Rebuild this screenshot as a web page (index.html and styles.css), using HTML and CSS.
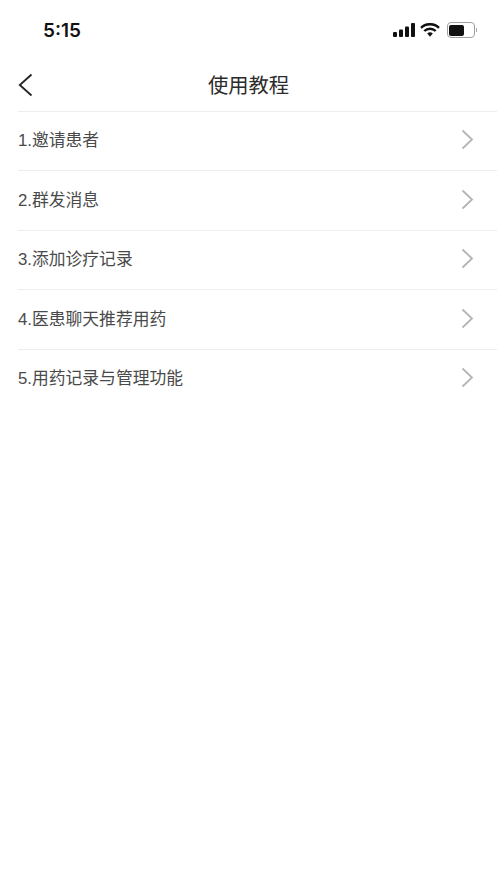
FILE: index.html
```html
<!DOCTYPE html>
<html lang="zh-CN">
<head>
  <meta charset="UTF-8">
  <title>使用教程</title>
  <link rel="stylesheet" href="styles.css">
</head>
<body>
  <div class="status-bar">
    <span class="time">5:15</span>
    <div class="status-icons">
      <svg class="signal" width="22" height="14" viewBox="0 0 22 14">
        <rect x="0" y="9" width="4" height="5" rx="1"/>
        <rect x="6" y="6.5" width="4" height="7.5" rx="1"/>
        <rect x="12" y="3.5" width="4" height="10.5" rx="1"/>
        <rect x="18" y="0" width="4" height="14" rx="1"/>
      </svg>
      <svg class="wifi" width="20" height="14" viewBox="0 0 20 14">
        <path d="M1 4.8a13 13 0 0 1 18 0" fill="none" stroke="#111" stroke-width="2.4"/>
        <path d="M4.3 8a8.2 8.2 0 0 1 11.4 0" fill="none" stroke="#111" stroke-width="2.4"/>
        <path d="M7.2 10.6a4 4 0 0 1 5.6 0L10 13.8z" fill="#111"/>
      </svg>
      <div class="battery">
        <div class="battery-body"><div class="battery-level"></div></div>
        <div class="battery-tip"></div>
      </div>
    </div>
  </div>

  <div class="nav-bar">
    <svg class="back" width="15" height="24" viewBox="0 0 15 24">
      <path d="M13.5 1.5 1.8 12l11.7 10.5" fill="none" stroke="#222" stroke-width="1.8"/>
    </svg>
    <h1 class="nav-title">使用教程</h1>
  </div>

  <ul class="menu">
    <li class="menu-item"><span>1.邀请患者</span><svg class="arrow" width="13" height="21" viewBox="0 0 13 21"><path d="M1.5 1.5 11 10.5l-9.5 9" /></svg></li>
    <li class="menu-item"><span>2.群发消息</span><svg class="arrow" width="13" height="21" viewBox="0 0 13 21"><path d="M1.5 1.5 11 10.5l-9.5 9" /></svg></li>
    <li class="menu-item"><span>3.添加诊疗记录</span><svg class="arrow" width="13" height="21" viewBox="0 0 13 21"><path d="M1.5 1.5 11 10.5l-9.5 9" /></svg></li>
    <li class="menu-item"><span>4.医患聊天推荐用药</span><svg class="arrow" width="13" height="21" viewBox="0 0 13 21"><path d="M1.5 1.5 11 10.5l-9.5 9" /></svg></li>
    <li class="menu-item"><span>5.用药记录与管理功能</span><svg class="arrow" width="13" height="21" viewBox="0 0 13 21"><path d="M1.5 1.5 11 10.5l-9.5 9" /></svg></li>
  </ul>
</body>
</html>
```

FILE: styles.css
```css
html, body {
  height: 100%;
}

body {
  margin: 0;
  background: #fff;
  font-family: "Liberation Sans", "Noto Sans CJK SC", sans-serif;
  overflow: hidden;
}

/* Barra de status */
.status-bar {
  height: 60px;
  display: flex;
  justify-content: space-between;
  align-items: center;
  padding: 0 20px 0 43px;
}

.time {
  font-family: "Inter", "Liberation Sans", sans-serif;
  font-size: 19px;
  font-weight: 600;
  color: #111;
}

.status-icons {
  display: flex;
  align-items: center;
  gap: 5px;
}

.signal {
  fill: #111;
}

.battery {
  display: flex;
  align-items: center;
  gap: 1px;
  margin-left: 2px;
}

.battery-body {
  width: 28px;
  height: 16px;
  box-sizing: border-box;
  border: 1.5px solid #a0a0a0;
  border-radius: 4px;
  padding: 1.5px;
}

.battery-level {
  width: 15px;
  height: 100%;
  background: #111;
  border-radius: 2px;
}

.battery-tip {
  width: 1.5px;
  height: 4px;
  background: #aaa;
}

/* Navegação */
.nav-bar {
  height: 50.6px;
  display: flex;
  align-items: center;
  justify-content: center;
  position: relative;
}

.back {
  position: absolute;
  left: 18px;
  top: 13px;
}

.nav-title {
  margin: 0 0 3px;
  font-size: 20.3px;
  font-weight: 400;
  color: #2b2b2b;
}

/* Lista */
.menu {
  list-style: none;
  margin: 0;
  padding: 0 0 0 18px;
}

.menu-item {
  height: 59.5px;
  box-sizing: border-box;
  border-top: 1px solid #eeeeee;
  display: flex;
  align-items: center;
  justify-content: space-between;
  padding: 0 23px 2px 0;
  font-size: 16.8px;
  color: #4a4a4a;
}

.menu-item span {
  margin-bottom: 1px;
}

.arrow {
  fill: none;
  stroke: #b4b4b4;
  stroke-width: 1.8;
}
```
